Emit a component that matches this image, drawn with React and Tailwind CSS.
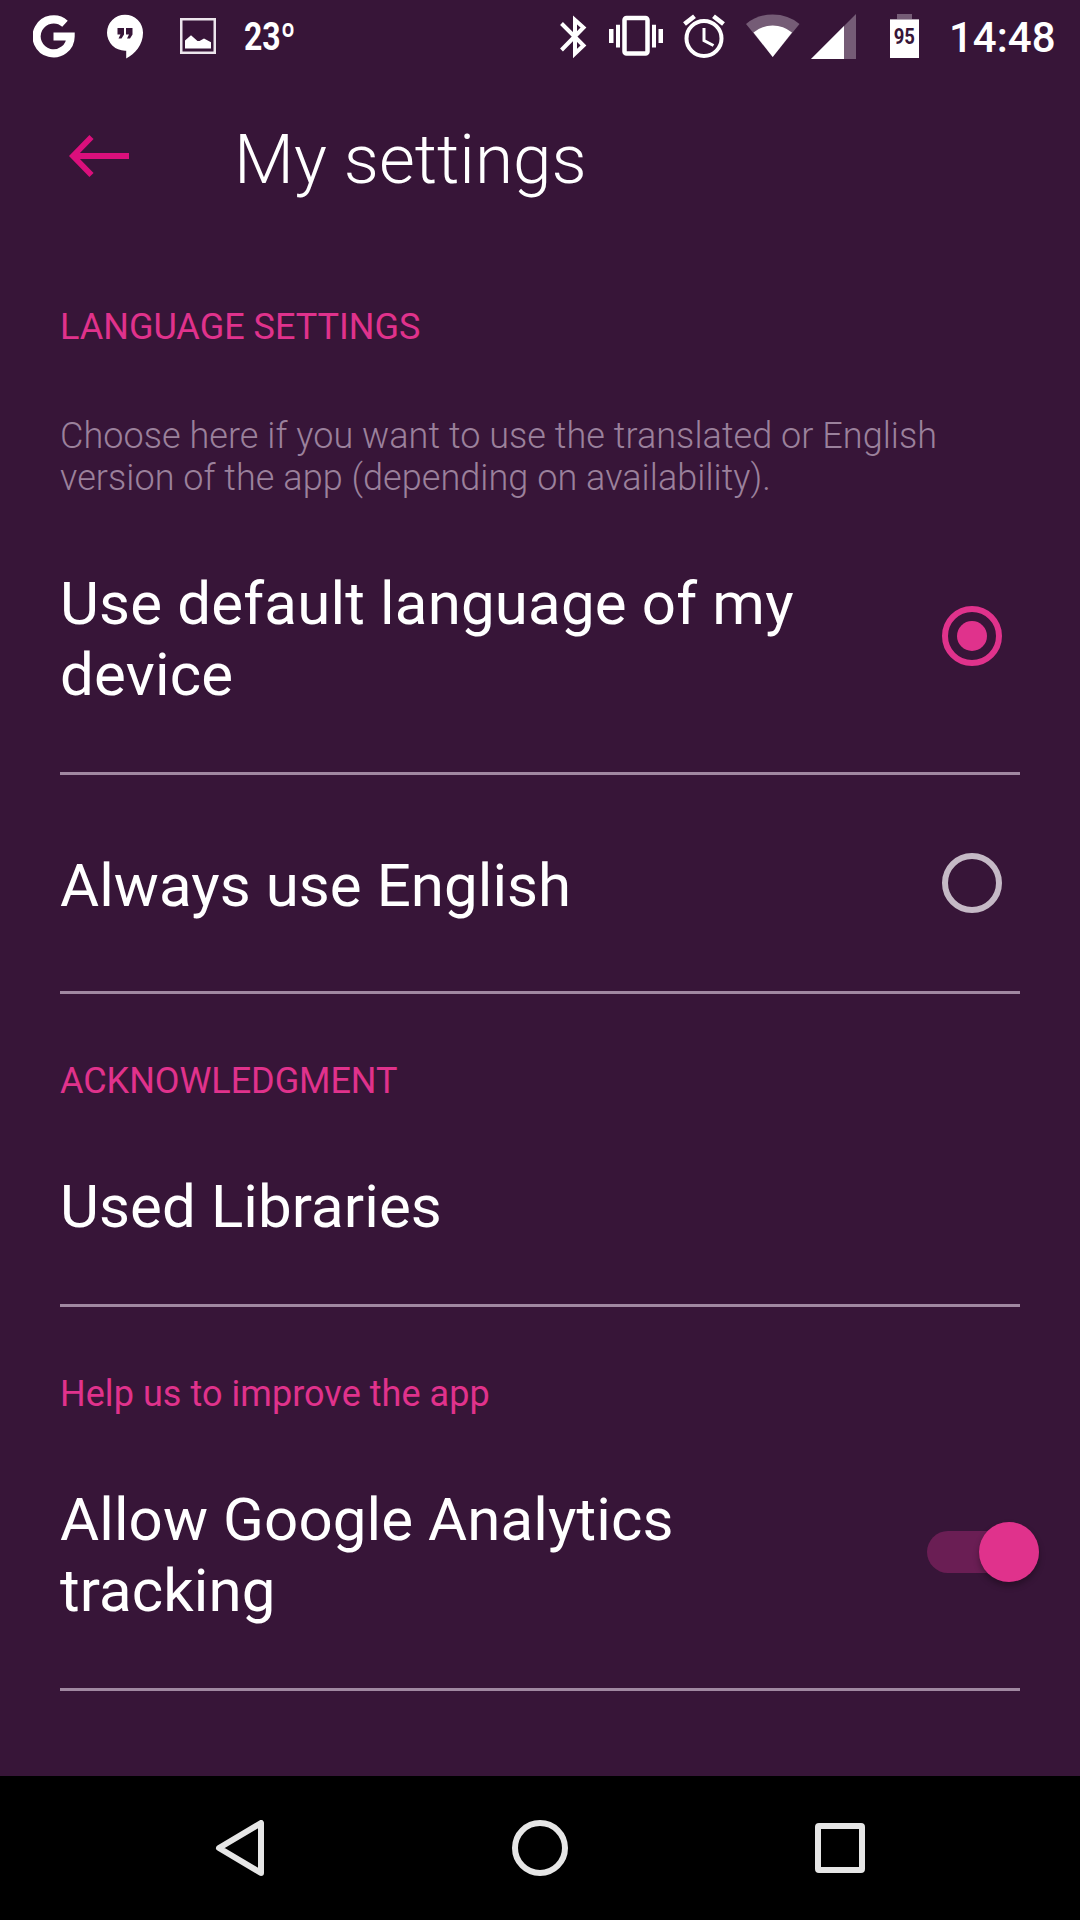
function StatusBar() {
  return (
    <div className="flex h-[72px] items-start">
      <svg className="ml-[33px] mt-[14px] h-[44px] w-[44px] shrink-0" viewBox="0 0 44 44" fill="none" stroke="#fff" strokeWidth="8.2">
        <path d="M32 9.800A17 17 0 1 0 37.600 22.500H20.500" />
      </svg>
      <svg className="ml-[30px] mt-[14px] h-[46px] w-[36px] shrink-0" viewBox="0 0 36 46">
        <path d="M18 .7a18 18 0 0 0 0 36h1.2v7.8C28 40 36 30.500 36 19A18 18 0 0 0 18 .7z" fill="#fff" />
        <path d="M10.500 14h6.500v6.500l-2.500 4h-3l2-4h-3zM19 14h6.500v6.500l-2.500 4h-3l2-4h-3z" fill="#371538" />
      </svg>
      <svg className="ml-[37px] mt-[18px] h-[36px] w-[36px] shrink-0" viewBox="0 0 36 36">
        <rect x="1.250" y="1.250" width="33.500" height="33.500" fill="none" stroke="#ece5ec" strokeWidth="2.500" />
        <path d="M5 30.500V22.500l6-5.200 6.500 5.700h2l4.500-2.500 7 3.800v6.200z" fill="#fff" />
      </svg>
      <div className="ml-[28px] mt-[15px] h-[44px] w-[54px] shrink-0 whitespace-nowrap">
        <span className="inline-block origin-left scale-x-[0.83] text-[38.5px] font-bold leading-[44px]">23º</span>
      </div>
      <svg className="ml-[262px] mt-[14px] h-[46px] w-[28px] shrink-0" viewBox="0 0 28 46" fill="none" stroke="#fff" strokeWidth="4">
        <path d="M1.500 9.500L23.500 31.500 15 39.500V6l8.500 7.500L1.500 36" strokeMiterlimit="10" />
      </svg>
      <svg className="ml-[21px] mt-[14px] h-[44px] w-[54px] shrink-0" viewBox="0 0 54 44" fill="#fff">
        <rect x="15.500" y="4" width="23" height="35.500" rx="2" fill="none" stroke="#fff" strokeWidth="4.500" />
        <path d="M0 15h4.500v14H0zM7 10.700h4v22.800H7zM43 10.700h4v22.800h-4zM49.500 15H54v14h-4.500z" />
      </svg>
      <svg className="ml-[20px] mt-[14px] h-[46px] w-[42px] shrink-0" viewBox="0 0 42 46" fill="none" stroke="#fff">
        <circle cx="21" cy="24.500" r="17.500" strokeWidth="4" />
        <path d="M1.500 10l10-7.800M30.500 2.200l10 7.800" strokeWidth="4.600" />
        <path d="M21 14v12.500l9.500 5" strokeWidth="3" />
      </svg>
      <svg className="ml-[21px] mt-[14px] h-[46px] w-[54px] shrink-0" viewBox="0 0 54 46">
        <path d="M0 10Q11 .5 26.700 .5T53.500 10L26.700 43z" fill="#755c76" />
        <path d="M7.500 18.500Q16 11.500 26.700 11.500T46 18.500L26.700 43z" fill="#fff" />
      </svg>
      <svg className="ml-[11px] mt-[14px] h-[46px] w-[46px] shrink-0" viewBox="0 0 46 46">
        <path d="M0 45L45 0v45z" fill="#755c76" />
        <path d="M0 45L33 12v33z" fill="#fff" />
      </svg>
      <div className="ml-[33px] mt-[14px] flex h-[44px] w-[29px] shrink-0 flex-col items-center">
        <div className="h-[5px] w-[15px] bg-[#755c76]" />
        <div className="flex h-[39px] w-full items-center justify-center border-t border-[#b5a8b6] bg-white">
          <span className="inline-block scale-x-[0.86] pb-[4px] text-[21.5px] font-bold leading-[28px] text-[#371538]">95</span>
        </div>
      </div>
      <div className="ml-[30px] mt-[13px] whitespace-nowrap text-[42px] font-medium leading-[50px]">14:48</div>
    </div>
  );
}

function Radio({ checked }) {
  return checked ? (
    <div className="mr-[18px] flex size-[60px] shrink-0 items-center justify-center rounded-full border-6 border-[#e0328c]">
      <div className="size-[30px] rounded-full bg-[#e0328c]" />
    </div>
  ) : (
    <div className="mr-[18px] size-[60px] shrink-0 rounded-full border-6 border-[#c5b9c6]" />
  );
}

export default function App() {
  return (
    <div className="flex h-[1920px] w-[1080px] flex-col overflow-hidden bg-[#371538] font-['Roboto',sans-serif] text-white">
      <StatusBar />
      <header className="flex h-[168px] items-start">
        <svg className="ml-[69px] mt-[60px] h-[48px] w-[60px]" viewBox="0 0 60 48" fill="none" stroke="#db0f7c" strokeWidth="5.800">
          <path d="M60 24H5M22.500 5L4 24l18.500 19" />
        </svg>
        <h1 className="ml-[105px] mt-[46px] whitespace-nowrap text-[69.3px] font-light leading-[84px]">My settings</h1>
      </header>

      <main className="flex flex-1 flex-col px-[60px]">
        <h2 className="mt-[66px] text-[36px] leading-[42px] text-[#e0328c]">LANGUAGE SETTINGS</h2>
        <p className="mt-[67px] text-[36px] font-light leading-[42px] tracking-[0.05px] text-[#9b819c]">
          Choose here if you want to use the translated or English
          <br />
          version of the app (depending on availability).
        </p>
        <div className="flex h-[276px] items-center justify-between border-b-3 border-[#a088a1] pt-px">
          <div className="w-[760px] pt-[6px] text-[60px] leading-[71px] tracking-[0.18px]">
            Use default language of my device
          </div>
          <Radio checked />
        </div>
        <div className="flex h-[219px] items-center justify-between border-b-3 border-[#a088a1]">
          <div className="pt-[4px] text-[60px] leading-[71px] tracking-[0.06px]">Always use English</div>
          <Radio />
        </div>
        <h2 className="mt-[66px] text-[36px] leading-[42px] tracking-[-0.06px] text-[#e0328c]">ACKNOWLEDGMENT</h2>
        <div className="flex h-[205px] items-center border-b-3 border-[#a088a1] pt-[7px]">
          <div className="text-[60px] leading-[71px] tracking-[0.1px]">Used Libraries</div>
        </div>
        <h2 className="mt-[66px] text-[36px] leading-[42px] tracking-[0.05px] text-[#e0328c]">Help us to improve the app</h2>
        <div className="flex h-[276px] items-center justify-between border-b-3 border-[#a088a1] pt-px">
          <div className="w-[760px] pt-[6px] text-[60px] leading-[71px] tracking-[0.1px]">
            Allow Google Analytics
            <br />
            tracking
          </div>
          <div className="-mr-[19px] flex h-[42px] w-[112px] shrink-0 items-center justify-end rounded-full bg-[#6a1e54]">
            <div className="size-[60px] shrink-0 rounded-full bg-[#e0328c] shadow-[0_4px_6px_rgba(0,0,0,0.3)]" />
          </div>
        </div>
      </main>

      <nav className="flex h-[144px] shrink-0 items-center bg-black">
        <svg className="ml-[215px] h-[56px] w-[49px]" viewBox="0 0 49 56" fill="none" stroke="#e6e6e6" strokeWidth="6" strokeLinejoin="round">
          <path d="M46 3v50L4 28z" />
        </svg>
        <div className="ml-[248px] size-[56px] rounded-full border-6 border-[#e6e6e6]" />
        <div className="ml-[247px] size-[50px] rounded-[4px] border-6 border-[#e6e6e6]" />
      </nav>
    </div>
  );
}
